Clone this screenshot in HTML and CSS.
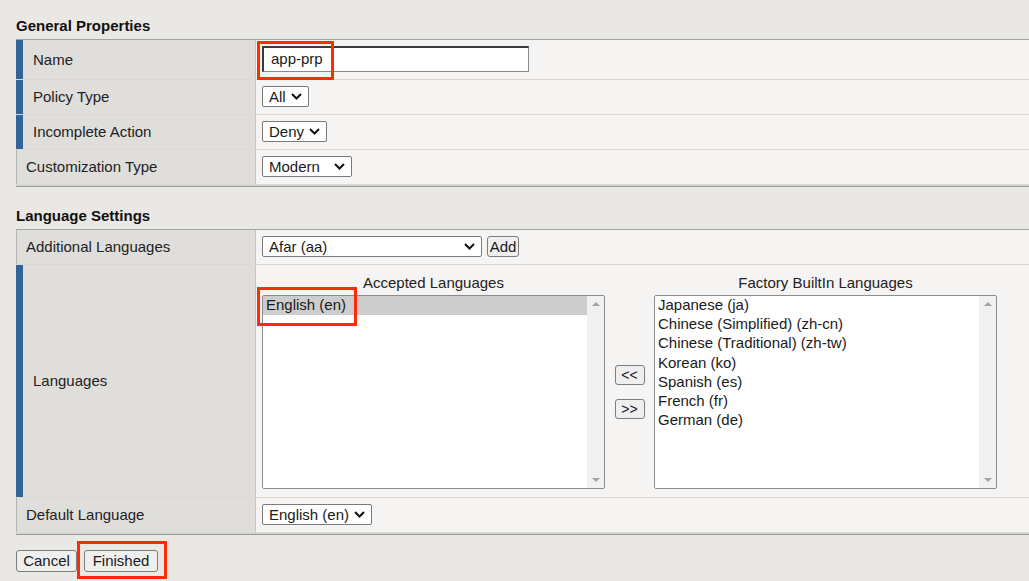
FILE: index.html
```html
<!DOCTYPE html>
<html lang="en">
<head>
<meta charset="utf-8">
<title>Access Policy Properties</title>
<link rel="stylesheet" href="styles.css">
</head>
<body>
<div class="page">
  <h2 class="section-title">General Properties</h2>
  <div class="table">
    <div class="row row-tall">
      <div class="label req">Name</div>
      <div class="value">
        <div class="text-input">app-prp</div>
        <span class="hl hl-name"></span>
      </div>
    </div>
    <div class="row">
      <div class="label req">Policy Type</div>
      <div class="value">
        <div class="select w-all"><span>All</span><svg width="11" height="7" viewBox="0 0 11 7"><path d="M1 1 L5.5 5.5 L10 1" fill="none" stroke="#111" stroke-width="2"/></svg></div>
      </div>
    </div>
    <div class="row">
      <div class="label req">Incomplete Action</div>
      <div class="value">
        <div class="select w-deny"><span>Deny</span><svg width="11" height="7" viewBox="0 0 11 7"><path d="M1 1 L5.5 5.5 L10 1" fill="none" stroke="#111" stroke-width="2"/></svg></div>
      </div>
    </div>
    <div class="row">
      <div class="label">Customization Type</div>
      <div class="value">
        <div class="select w-modern"><span>Modern</span><svg width="11" height="7" viewBox="0 0 11 7"><path d="M1 1 L5.5 5.5 L10 1" fill="none" stroke="#111" stroke-width="2"/></svg></div>
      </div>
    </div>
  </div>

  <h2 class="section-title gap-top">Language Settings</h2>
  <div class="table">
    <div class="row">
      <div class="label">Additional Languages</div>
      <div class="value">
        <div class="select w-afar"><span>Afar (aa)</span><svg width="11" height="7" viewBox="0 0 11 7"><path d="M1 1 L5.5 5.5 L10 1" fill="none" stroke="#111" stroke-width="2"/></svg></div>
        <button class="btn btn-add">Add</button>
      </div>
    </div>
    <div class="row row-lang">
      <div class="label req">Languages</div>
      <div class="value value-lang">
        <div class="lang-col">
          <div class="lang-head">Accepted Languages</div>
          <div class="listbox-wrap">
            <div class="listbox">
              <div class="items">
                <div class="item selected">English (en)</div>
              </div>
              <div class="scroll"><span class="arr-up"></span><span class="arr-down"></span></div>
            </div>
            <span class="hl hl-en"></span>
          </div>
        </div>
        <div class="mid-col">
          <button class="btn btn-move">&lt;&lt;</button>
          <button class="btn btn-move">&gt;&gt;</button>
        </div>
        <div class="lang-col">
          <div class="lang-head">Factory BuiltIn Languages</div>
          <div class="listbox">
            <div class="items">
              <div class="item">Japanese (ja)</div>
              <div class="item">Chinese (Simplified) (zh-cn)</div>
              <div class="item">Chinese (Traditional) (zh-tw)</div>
              <div class="item">Korean (ko)</div>
              <div class="item">Spanish (es)</div>
              <div class="item">French (fr)</div>
              <div class="item">German (de)</div>
            </div>
            <div class="scroll"><span class="arr-up"></span><span class="arr-down"></span></div>
          </div>
        </div>
      </div>
    </div>
    <div class="row">
      <div class="label">Default Language</div>
      <div class="value">
        <div class="select w-en"><span>English (en)</span><svg width="11" height="7" viewBox="0 0 11 7"><path d="M1 1 L5.5 5.5 L10 1" fill="none" stroke="#111" stroke-width="2"/></svg></div>
      </div>
    </div>
  </div>

  <div class="actions">
    <button class="btn btn-action btn-cancel">Cancel</button>
    <span class="finish-wrap">
      <button class="btn btn-action btn-finish">Finished</button>
      <span class="hl hl-finish"></span>
    </span>
  </div>
</div>
</body>
</html>
```

FILE: styles.css
```css
* { box-sizing: border-box; }

html, body {
  margin: 0;
  padding: 0;
  background: #e9e8e4;
  overflow: hidden;
}

body {
  font-family: "Liberation Sans", Arial, sans-serif;
  font-size: 15px;
  color: #222;
  width: 1029px;
  height: 581px;
}

.page {
  padding: 17px 0 0 16px;
}

.section-title {
  margin: 0 0 4px 0;
  font-size: 15px;
  line-height: 18px;
  font-weight: bold;
  color: #111;
}

.section-title.gap-top {
  margin-top: 20px;
  margin-bottom: 4px;
}

.table {
  border-top: 1px solid #a3a3a3;
  border-bottom: 1px solid #999;
  background: #f5f4f2;
}

.row {
  display: flex;
  height: 35px;
  border-top: 1px solid #d9d8d5;
}

.row:first-child {
  height: 34px;
  border-top: none;
}

.row.row-tall {
  height: 39px;
}

.row:last-child {
  height: 37px;
  border-bottom: 2px solid #d6d5d2;
}

.row.row-lang {
  height: 233px;
}

.label {
  width: 239px;
  flex: none;
  background: #dfdedb;
  border-left: 1px solid #b5b5b5;
  padding-left: 9px;
  padding-bottom: 1px;
  display: flex;
  align-items: center;
}

.label.req {
  border-left: 7px solid #31659a;
  padding-left: 10px;
}

.value {
  position: relative;
  flex: 1;
  border-left: 1px solid #c6c5c2;
  padding-left: 6px;
  padding-bottom: 1px;
  display: flex;
  align-items: center;
  gap: 5px;
}

.text-input {
  width: 267px;
  height: 26px;
  background: #fff;
  border-style: solid;
  border-width: 2px 1px 1px 2px;
  border-color: #3a3a3a #8a8a8a #8a8a8a #3a3a3a;
  padding-left: 7px;
  line-height: 22px;
  color: #1a1a1a;
}

.select {
  height: 21px;
  display: flex;
  align-items: center;
  justify-content: space-between;
  background: #fff;
  border: 1px solid #7a7a7a;
  border-radius: 2px;
  padding: 0 6px;
  color: #1a1a1a;
}

.select svg { flex: none; }

.w-all { width: 47px; }
.w-deny { width: 65px; }
.w-modern { width: 90px; }
.w-afar { width: 220px; }
.w-en { width: 110px; }

.btn {
  font-family: "Liberation Sans", Arial, sans-serif;
  font-size: 15px;
  color: #1a1a1a;
  background: #efefef;
  border: 1px solid #7d7d7d;
  border-radius: 3px;
  height: 21px;
  padding: 0;
  margin: 0;
  line-height: 19px;
}

.btn-add { width: 32px; }

.value-lang {
  align-items: flex-start;
  padding-top: 9px;
  padding-bottom: 0;
  gap: 0;
}

.lang-col {
  width: 343px;
  flex: none;
}

.lang-head {
  text-align: center;
  line-height: 18px;
  margin-bottom: 3px;
}

.listbox-wrap {
  position: relative;
}

.listbox {
  height: 194px;
  display: flex;
  background: #fff;
  border: 1px solid #8c8c8c;
  border-radius: 2px;
}

.items {
  flex: 1;
  padding-top: 0;
}

.item {
  line-height: 17.2px;
  height: 19.2px;
  padding-left: 3px;
  padding-bottom: 2px;
  color: #1a1a1a;
  white-space: nowrap;
}

.item.selected {
  background: #cdcdcd;
}

.scroll {
  width: 17px;
  flex: none;
  background: #f1f1f1;
  display: flex;
  flex-direction: column;
  justify-content: space-between;
  align-items: center;
  padding: 6px 0 6px 0;
}

.arr-up {
  width: 0;
  height: 0;
  border-left: 4px solid transparent;
  border-right: 4px solid transparent;
  border-bottom: 4px solid #a3a3a3;
}

.arr-down {
  width: 0;
  height: 0;
  border-left: 4px solid transparent;
  border-right: 4px solid transparent;
  border-top: 4px solid #a3a3a3;
}

.mid-col {
  width: 49px;
  flex: none;
  height: 215px;
  padding-top: 21px;
  display: flex;
  flex-direction: column;
  align-items: center;
  justify-content: center;
  gap: 14px;
}

.btn-move {
  width: 30px;
  height: 20px;
  font-size: 14px;
  line-height: 18px;
}

.actions {
  margin-top: 15px;
  display: flex;
  gap: 7px;
}

.btn-action {
  height: 22px;
  line-height: 20px;
}

.btn-cancel { width: 61px; }
.btn-finish { width: 74px; }

.finish-wrap {
  position: relative;
  display: inline-block;
}

.hl {
  position: absolute;
  border: 3px solid #ff2a06;
  pointer-events: none;
}

.hl-name {
  left: 1px;
  top: 1px;
  width: 77px;
  height: 39px;
}

.hl-en {
  left: -5px;
  top: -8px;
  width: 100px;
  height: 39px;
}

.hl-finish {
  left: -7px;
  top: -9px;
  width: 90px;
  height: 38px;
}
```
